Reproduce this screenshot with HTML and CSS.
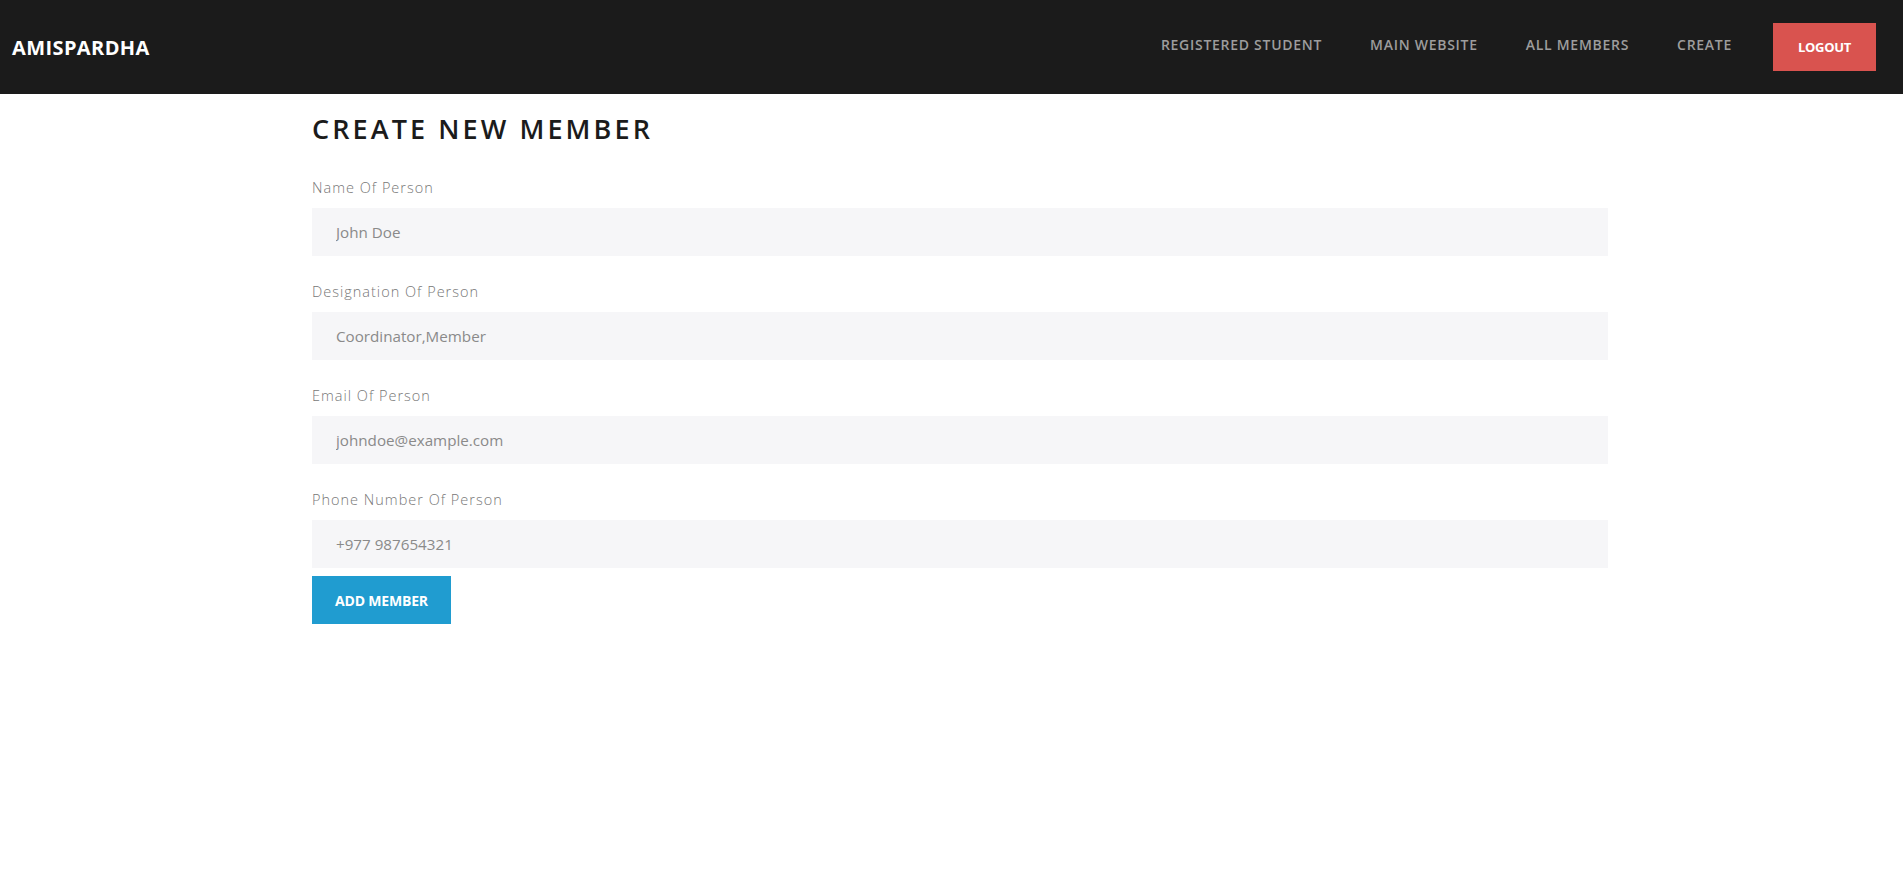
FILE: index.html
```html
<!DOCTYPE html>
<html lang="en">
<head>
<meta charset="utf-8">
<title>Create New Member</title>
<link rel="stylesheet" href="styles.css">
</head>
<body>
<header class="topbar">
  <a class="brand" href="#">AMISPARDHA</a>
  <nav class="nav">
    <a class="nav-link" href="#">REGISTERED STUDENT</a>
    <a class="nav-link" href="#">MAIN WEBSITE</a>
    <a class="nav-link" href="#">ALL MEMBERS</a>
    <a class="nav-link" href="#">CREATE</a>
    <a class="logout" href="#">LOGOUT</a>
  </nav>
</header>
<main class="content">
  <h1 class="title">CREATE NEW MEMBER</h1>
  <form class="form">
    <div class="field">
      <label class="label">Name Of Person</label>
      <input class="input" type="text" placeholder="John Doe">
    </div>
    <div class="field">
      <label class="label">Designation Of Person</label>
      <input class="input" type="text" placeholder="Coordinator,Member">
    </div>
    <div class="field">
      <label class="label">Email Of Person</label>
      <input class="input" type="text" placeholder="johndoe@example.com">
    </div>
    <div class="field last">
      <label class="label">Phone Number Of Person</label>
      <input class="input" type="text" placeholder="+977 987654321">
    </div>
    <button class="submit" type="button">ADD MEMBER</button>
  </form>
</main>
</body>
</html>
```

FILE: styles.css
```css
* { box-sizing: border-box; }
html, body { margin: 0; padding: 0; background: #fff; }
body { font-family: "Open Sans", "Liberation Sans", sans-serif; }

.topbar {
  height: 94px;
  background: #1b1b1b;
  display: flex;
  align-items: center;
  justify-content: space-between;
  padding: 0 27px 0 12px;
}
.brand {
  color: #fff;
  text-decoration: none;
  font-weight: 700;
  font-size: 20px;
  letter-spacing: 0.4px;
  margin-top: 1px;
}
.nav {
  display: flex;
  align-items: center;
}
.nav-link {
  color: #9d9d9d;
  text-decoration: none;
  font-weight: 600;
  font-size: 14px;
  letter-spacing: 0.72px;
  margin-right: 48px;
  margin-top: -6px;
}
.nav-link:nth-child(4) { margin-right: 41px; }
.logout {
  display: flex;
  align-items: center;
  justify-content: center;
  height: 48px;
  width: 103px;
  background: #d9534f;
  color: #fff;
  text-decoration: none;
  font-weight: 700;
  font-size: 13px;
  letter-spacing: -0.3px;
}

.content {
  width: 1296px;
  margin-left: 312px;
  padding-top: 17px;
}
.title {
  margin: 0 0 29px;
  font-size: 27px;
  font-weight: 600;
  letter-spacing: 3.1px;
  color: #1b1b1b;
  line-height: 36px;
}
.field { margin-bottom: 24px; display: flex; flex-direction: column; }
.field.last { margin-bottom: 8px; }
.label {
  font-size: 14.5px;
  font-weight: 300;
  letter-spacing: 1px;
  color: #777;
  line-height: 23px;
  margin-bottom: 9px;
}
.input {
  height: 48px;
  border: none;
  outline: none;
  background: #f6f6f8;
  padding: 0 24px;
  font-family: "Open Sans", "Liberation Sans", sans-serif;
  font-size: 15.2px;
  color: #888;
}
.input::placeholder { color: #8a8a8a; opacity: 1; }
.submit {
  height: 48px;
  width: 139px;
  border: none;
  background: #209cd0;
  color: #fff;
  font-family: "Open Sans", "Liberation Sans", sans-serif;
  font-weight: 700;
  font-size: 14px;
  letter-spacing: -0.2px;
  padding: 0;
}
```
